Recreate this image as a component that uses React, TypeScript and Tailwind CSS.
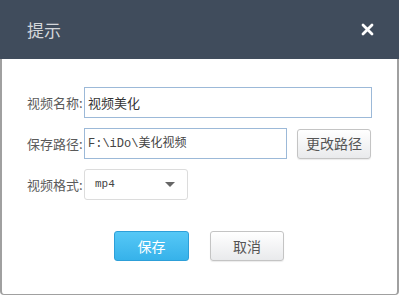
function Row({ label, children }: { label: string; children: React.ReactNode }) {
    return (
        <div className="flex items-center h-[31px]">
            <span className="w-[57px] text-[13px] text-[#5a5a5a] whitespace-nowrap">{label}</span>
            {children}
        </div>
    )
}

function GrayButton({ text, className }: { text: string; className: string }) {
    return (
        <button className={`${className} rounded-[3px] border border-[#c4c4c4] bg-gradient-to-b from-white to-[#e9eaec] text-[14px] text-[#555] shadow-[0_1px_1px_rgba(0,0,0,0.08)]`}>
            {text}
        </button>
    )
}

export default function App() {
    return (
        <div className="w-[400px] h-[295px] bg-white font-['Noto_Sans_CJK_SC',sans-serif]">
            <div className="w-[399px] h-[295px] flex flex-col">
                <header className="h-[59px] bg-[#404c5c] flex items-center justify-between pl-[27px] pr-[25px]">
                    <h1 className="text-[17px] text-[#d3d6da] leading-none">提示</h1>
                    <svg width="13" height="13" viewBox="0 0 13 13">
                        <path d="M2 2 L11 11 M11 2 L2 11" stroke="#fff" strokeWidth="2.8" strokeLinecap="round" />
                    </svg>
                </header>
                <main className="flex-1 border-x-2 border-b border-[#a0a0a0] rounded-b-[4px] pl-[25px] pt-[28px] flex flex-col gap-[10px]">
                    <Row label="视频名称:">
                        <div className="w-[288px] h-[31px] border border-[#9cb9d8] flex items-center pl-[3px] text-[13px] text-[#333]">
                            视频美化
                        </div>
                    </Row>
                    <Row label="保存路径:">
                        <div className="w-[203px] h-[31px] border border-[#9cb9d8] flex items-center pl-[3px] text-[12px] text-[#444] font-['Liberation_Mono','Noto_Sans_CJK_SC',monospace]">
                            F:\iDo\美化视频
                        </div>
                        <GrayButton text="更改路径" className="ml-[10px] w-[74px] h-[30px]" />
                    </Row>
                    <Row label="视频格式:">
                        <div className="w-[104px] h-[31px] border border-[#dcdcdc] rounded-[3px] flex items-center justify-between pl-[10px] pr-[12px]">
                            <span className="text-[11px] text-[#444] font-['Liberation_Mono',monospace]">mp4</span>
                            <svg width="10" height="6" viewBox="0 0 10 6">
                                <path d="M0 0 L10 0 L5 5 Z" fill="#666" />
                            </svg>
                        </div>
                    </Row>
                    <div className="flex mt-[21px] ml-[87px] gap-[21px]">
                        <button className="w-[75px] h-[30px] rounded-[3px] border border-[#2d9fd8] bg-gradient-to-b from-[#55c8f6] to-[#36b2ea] text-white text-[14px]">
                            保存
                        </button>
                        <GrayButton text="取消" className="w-[74px] h-[30px]" />
                    </div>
                </main>
            </div>
        </div>
    )
}
